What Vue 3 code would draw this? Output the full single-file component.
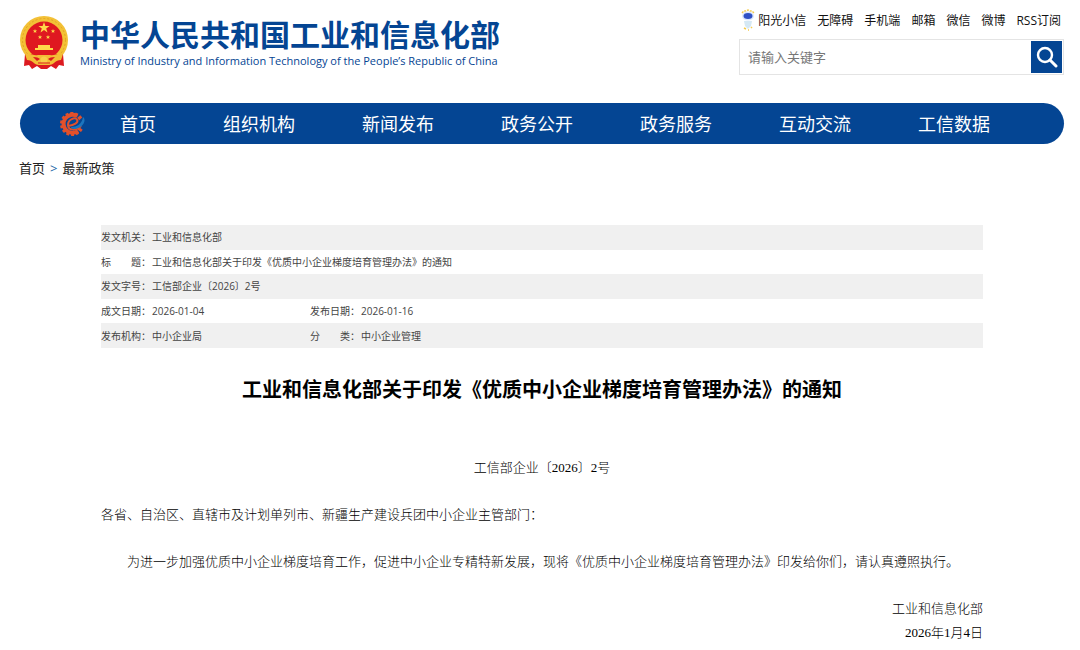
<script setup>
import { ref } from 'vue'

const keyword = ref('')
const topLinks = ['阳光小信', '无障碍', '手机端', '邮箱', '微信', '微博', 'RSS订阅']
const navItems = ['首页', '组织机构', '新闻发布', '政务公开', '政务服务', '互动交流', '工信数据']
const meta = [
  [['发文机关', '工业和信息化部']],
  [['标　　题', '工业和信息化部关于印发《优质中小企业梯度培育管理办法》的通知']],
  [['发文字号', '工信部企业〔2026〕2号']],
  [['成文日期', '2026-01-04'], ['发布日期', '2026-01-16']],
  [['发布机构', '中小企业局'], ['分　　类', '中小企业管理']],
]
const gearTeeth = Array.from({ length: 12 }, (_, i) => i * 26 + 35)
</script>

<template>
  <div class="page">
    <header class="header">
      <a class="brand" href="#">
        <svg class="emblem" viewBox="0 0 48 54" aria-hidden="true">
          <circle cx="24" cy="24" r="24" fill="#f3c136" />
          <circle cx="24" cy="24" r="21.500" fill="none" stroke="#e3a325" stroke-width="1" stroke-dasharray="2 2" />
          <path d="M5 38L4 50L9 49L12 53L17 50L21 53H27L31 50L36 53L39 49L44 50L43 38Z" fill="#dc1a20" />
          <circle cx="24" cy="24" r="18.500" fill="#df1820" />
          <g fill="#ffd94a">
            <path d="M24 6l1.400 4h4.200l-3.400 2.500 1.300 4-3.500-2.400-3.500 2.400 1.300-4-3.400-2.500h4.200z" />
            <path d="M15 13l.6 1.500h1.600l-1.300 1 .5 1.500-1.400-.9-1.400.9.500-1.500-1.300-1h1.600z" />
            <path d="M33 13l.6 1.500h1.600l-1.300 1 .5 1.500-1.400-.9-1.400.9.500-1.500-1.300-1h1.600z" />
            <path d="M20 19l.6 1.500h1.600l-1.300 1 .5 1.500-1.400-.9-1.400.9.500-1.500-1.300-1h1.600z" />
            <path d="M28 19l.6 1.500h1.600l-1.300 1 .5 1.500-1.400-.9-1.400.9.500-1.500-1.300-1h1.600z" />
            <path d="M18 29h12v3h3v2H15v-2h3z" />
          </g>
          <path d="M5 38C12 37 13 40 18 39H30C35 40 36 37 43 38L41 44C35 44 34 49 29 49H19C14 49 13 44 7 44Z" fill="#f3bd36" />
          <path d="M13 41q5 0 7 2l-3 2zM35 41q-5 0-7 2l3 2z" fill="#dc1a20" />
          <circle cx="24" cy="44" r="3.500" fill="#f9d04a" />
          <path d="M18 47h12" stroke="#dc1a20" stroke-width="1" />
        </svg>
        <span class="brand-text">
          <strong>中华人民共和国工业和信息化部</strong>
          <span lang="en">Ministry of Industry and Information Technology of the People’s Republic of China</span>
        </span>
      </a>
      <div class="tools">
        <nav class="top-links">
          <svg class="mascot" viewBox="0 0 14 22" aria-hidden="true">
            <path d="M1 4L3 2L5 2L7 1L9 2L11 2L13 4" fill="none" stroke="#f3ca4c" stroke-width="1.500" stroke-dasharray="2 1" />
            <ellipse cx="7" cy="7" rx="6" ry="4.500" fill="#dbe6fb" />
            <ellipse cx="7" cy="7" rx="4.500" ry="3" fill="#2f50c4" />
            <path d="M3 12h8l-1 5-3 3-3-3z" fill="#d5e8f4" />
            <path d="M3 19l2 1M7 21h1M10 19l1-1" stroke="#f3ca4c" stroke-width="1.500" />
          </svg>
          <a v-for="item in topLinks" :key="item" href="#">{{ item }}</a>
        </nav>
        <form class="search" @submit.prevent>
          <input v-model="keyword" type="text" aria-label="请输入关键字" placeholder="请输入关键字" />
          <button type="submit" aria-label="搜索">
            <svg viewBox="0 0 22 22" aria-hidden="true">
              <circle cx="9" cy="9" r="7" fill="none" stroke="#fff" stroke-width="2.400" />
              <path d="M14 14l6 6" stroke="#fff" stroke-width="3" stroke-linecap="round" />
            </svg>
          </button>
        </form>
      </div>
    </header>

    <nav class="main-nav">
      <svg class="gear" viewBox="0 0 28 26" aria-hidden="true">
        <g fill="#e2502b">
          <rect v-for="a in gearTeeth" :key="a" x="21" y="11.500" width="4" height="3" :transform="`rotate(${a} 13 13)`" />
        </g>
        <path d="M18 5A9 9 0 1 0 19 20" fill="none" stroke="#e2502b" stroke-width="4" />
        <path d="M9 15C15 14 20 12 18 8.500C16 6 9 8 9 14C9 20 18 20 22 15" fill="none" stroke="#e2502b" stroke-width="2" />
        <path d="M12 16C18 16 23 13 24 6C28 9 24 17 16 18C13 18 12 17 12 16Z" fill="#1c75be" />
      </svg>
      <a v-for="item in navItems" :key="item" href="#">{{ item }}</a>
    </nav>

    <nav class="crumbs" aria-label="当前位置">
      <a href="#">首页</a><span>&gt;</span><a href="#">最新政策</a>
    </nav>

    <main class="content">
      <table class="meta">
        <colgroup><col class="c-label" /><col class="c-value" /><col class="c-label" /><col /></colgroup>
        <tbody>
          <tr v-for="(row, i) in meta" :key="i">
            <template v-for="[label, value] in row" :key="label">
              <th scope="row">{{ label }}：</th>
              <td :colspan="row.length === 1 ? 3 : 1">{{ value }}</td>
            </template>
          </tr>
        </tbody>
      </table>

      <article>
        <h1>工业和信息化部关于印发《优质中小企业梯度培育管理办法》的通知</h1>
        <p class="number">工信部企业〔2026〕2号</p>
        <p>各省、自治区、直辖市及计划单列市、新疆生产建设兵团中小企业主管部门：</p>
        <p class="indent">为进一步加强优质中小企业梯度培育工作，促进中小企业专精特新发展，现将《优质中小企业梯度培育管理办法》印发给你们，请认真遵照执行。</p>
        <p class="sign">工业和信息化部<br />2026年1月4日</p>
      </article>
    </main>
  </div>
</template>

<style>
body {
  margin: 0;
  background: #fff;
}
</style>

<style scoped>
.page {
  font-family: "Open Sans", "Noto Sans CJK SC", sans-serif;
  color: #222;
}
a {
  color: inherit;
  text-decoration: none;
}
.header {
  display: flex;
  justify-content: space-between;
  align-items: flex-start;
  padding: 0 16px 0 20px;
}
.brand {
  display: flex;
  gap: 12px;
  padding-top: 16px;
  color: #044593;
}
.emblem {
  width: 48px;
  height: 54px;
}
.brand-text {
  display: flex;
  flex-direction: column;
  padding-top: 1px;
  white-space: nowrap;
}
.brand-text strong {
  font-size: 30px;
  line-height: 36px;
}
.brand-text span {
  font-size: 11px;
  line-height: 16px;
  font-weight: 500;
}
.tools {
  width: 325px;
  padding-top: 10px;
}
.top-links {
  display: flex;
  justify-content: flex-end;
  align-items: center;
  gap: 11px;
  height: 20px;
  padding-right: 3px;
  font-size: 12px;
  color: #111;
  white-space: nowrap;
}
.mascot {
  width: 14px;
  height: 22px;
  margin-right: -8px;
}
.search {
  display: flex;
  align-items: center;
  height: 36px;
  margin-top: 9px;
  padding-right: 1px;
  border: 1px solid #e4e4e4;
  box-sizing: border-box;
}
.search input {
  flex: 1;
  min-width: 0;
  height: 32px;
  padding: 0 8px;
  border: 0;
  outline: 0;
  box-sizing: border-box;
  font: 13px "Open Sans", "Noto Sans CJK SC", sans-serif;
}
.search input::placeholder {
  color: #777;
}
.search button {
  display: grid;
  place-items: center;
  width: 31px;
  height: 32px;
  padding: 0;
  border: 0;
  background: #044593;
}
.search button svg {
  width: 22px;
  height: 22px;
}
.main-nav {
  display: flex;
  align-items: center;
  gap: 67px;
  height: 41px;
  margin: 28px 16px 0 20px;
  padding-left: 39px;
  border-radius: 21px;
  background: #044593;
  color: #fff;
  font-size: 18px;
  line-height: 24px;
  white-space: nowrap;
}
.gear {
  width: 28px;
  height: 26px;
  margin-right: -34px;
}
.crumbs {
  display: flex;
  gap: 5px;
  margin-top: 14px;
  padding-left: 19px;
  font-size: 13px;
  line-height: 20px;
}
.crumbs span {
  color: #2568a8;
}
.content {
  margin: 47px 97px 0 101px;
}
.meta {
  width: 100%;
  height: 123px;
  table-layout: fixed;
  border-collapse: collapse;
  font-size: 10px;
  line-height: 16px;
  color: #444;
}
.meta tr:nth-child(odd) {
  background: #f0f0f0;
}
.meta th,
.meta td {
  padding: 0;
  text-align: left;
  font-weight: 400;
  white-space: nowrap;
}
.c-label {
  width: 51px;
}
.c-value {
  width: 158px;
}
article {
  font-family: "Liberation Serif", "Noto Sans CJK SC", sans-serif;
  font-size: 13px;
  line-height: 24px;
  color: #000;
}
h1 {
  margin: 27px 0 0;
  font-family: "Open Sans", "Noto Sans CJK SC", sans-serif;
  font-size: 20px;
  line-height: 30px;
  text-align: center;
}
p {
  margin: 23px 0 0;
  font-weight: 300;
}
.number {
  margin-top: 51px;
  text-align: center;
}
.indent {
  text-indent: 2em;
}
.sign {
  text-align: right;
}
</style>
